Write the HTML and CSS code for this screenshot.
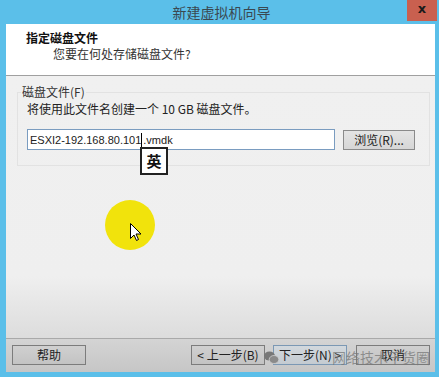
FILE: index.html
```html
<!DOCTYPE html>
<html>
<head>
<meta charset="utf-8">
<link rel="stylesheet" href="styles.css">
</head>
<body>
<div class="window">
  <div class="titlebar">
    <div class="title">新建虚拟机向导</div>
    <div class="close">x</div>
  </div>
  <div class="client">
    <div class="header">
      <div class="h-title">指定磁盘文件</div>
      <div class="h-sub">您要在何处存储磁盘文件?</div>
    </div>
    <div class="content">
      <div class="group">
        <div class="legend">磁盘文件(F)</div>
        <div class="desc">将使用此文件名创建一个 10 GB 磁盘文件。</div>
        <div class="row">
          <div class="input"><span>ESXI2-192.168.80.101</span><span class="caret"></span><span>.vmdk</span>
            <div class="ime">英</div>
          </div>
          <div class="btn browse">浏览(R)...</div>
        </div>
      </div>
      <div class="spot">
        <svg class="cursor" width="12" height="19" viewBox="0 0 12 19"><path d="M0.5 0.5 L0.5 15.5 L4 12 L6.5 17.5 L8.5 16.5 L6 11 L11 11 Z" fill="#fff" stroke="#000" stroke-width="1" stroke-linejoin="miter"/></svg>
      </div>
    </div>
    <div class="footer">
      <div class="btn">帮助</div>
      <div class="spacer"></div>
      <div class="btn">&lt; 上一步(B)</div>
      <div class="btn next">下一步(N) &gt;</div>
      <div class="btn cancel">取消</div>
      <div class="watermark">
        <svg width="15" height="13" viewBox="0 0 15 13"><ellipse cx="5.5" cy="5" rx="5.5" ry="4.5" fill="#777"/><ellipse cx="10" cy="8.5" rx="4.8" ry="4" fill="#8a8a8a" stroke="#cfcfcf" stroke-width="0.8"/></svg>
        <span>网络技术干货圈</span>
      </div>
    </div>
  </div>
</div>
</body>
</html>
```

FILE: styles.css
```css
* { box-sizing: border-box; }
html, body { margin: 0; padding: 0; }
body {
  width: 439px;
  height: 377px;
  overflow: hidden;
  font-family: "Noto Sans CJK SC", "DejaVu Sans", sans-serif;
  font-size: 12px;
  color: #1e1e1e;
}
.window {
  width: 439px;
  height: 377px;
  background: #5bbfe9;
  display: flex;
  flex-direction: column;
  padding: 0 4px 5px 6px;
}
.titlebar {
  height: 24px;
  display: flex;
  align-items: center;
  justify-content: center;
  position: relative;
  flex: none;
}
.title {
  font-size: 14px;
  color: #3a4850;
  margin-left: 2px;
}
.close {
  position: absolute;
  right: -2px;
  top: 0;
  width: 30px;
  height: 21px;
  background: #c9604f;
  color: #1a1a1a;
  font-family: "DejaVu Sans", sans-serif;
  font-weight: bold;
  font-size: 13px;
  line-height: 18px;
  text-align: center;
}
.client {
  flex: 1;
  display: flex;
  flex-direction: column;
  background: #f0f0f0;
  position: relative;
}
.header {
  height: 52px;
  background: #ffffff;
  border-bottom: 1px solid #a0a0a0;
  padding: 6px 0 0 20px;
  flex: none;
}
.h-title {
  font-weight: bold;
  font-size: 12px;
  line-height: 16px;
  color: #111;
}
.h-sub {
  margin-left: 27px;
  line-height: 16px;
  color: #333;
}
.content {
  flex: 1;
  position: relative;
  padding: 8px 5px 0 11px;
  background: linear-gradient(#f0f0f0 0, #efefef 200px, #dcdcdc 262px);
}
.group {
  border: 1px solid #e2e2e2;
  height: 74px;
  margin-top: 8px;
  position: relative;
  padding: 8px 0 0 9px;
}
.legend {
  position: absolute;
  top: -9px;
  left: 3px;
  padding: 0 1px;
  line-height: 16px;
  color: #333;
  background: #f0f0f0;
}
.desc {
  line-height: 16px;
  margin-top: 0;
  color: #222;
}
.row {
  display: flex;
  align-items: center;
  margin-top: 12px;
  gap: 8px;
}
.input {
  width: 308px;
  height: 21px;
  border: 1px solid #7a9cc0;
  background: #fff;
  display: flex;
  align-items: center;
  padding-left: 2px;
  font-family: "Liberation Sans", sans-serif;
  font-size: 11px;
  color: #222;
  position: relative;
}
.caret {
  width: 1px;
  height: 14px;
  background: #000;
  margin: 0 1px 0 0;
}
.ime {
  position: absolute;
  left: 112px;
  top: 17px;
  width: 28px;
  height: 28px;
  border: 2px solid #222;
  background: #fff;
  font-family: "Noto Sans CJK SC", sans-serif;
  font-weight: bold;
  font-size: 15px;
  line-height: 24px;
  text-align: center;
  color: #111;
}
.btn {
  width: 74px;
  height: 20px;
  border: 1px solid #8a8a8a;
  background: linear-gradient(#e4e4e4, #d6d6d6);
  text-align: center;
  line-height: 18px;
  font-size: 12px;
  color: #222;
  flex: none;
}
.browse {
  width: 72px;
  height: 20px;
  margin-top: 1px;
}
.spot {
  position: absolute;
  left: 99px;
  top: 124px;
  width: 50px;
  height: 50px;
  border-radius: 50%;
  background: #f1e30c;
}
.cursor {
  position: absolute;
  left: 25px;
  top: 23px;
}
.footer {
  height: 34px;
  flex: none;
  border-top: 1px solid #a9a9a9;
  background: linear-gradient(#d4d4d4, #c6c6c6);
  display: flex;
  align-items: center;
  padding: 0 5px 1px 6px;
  gap: 8px;
  position: relative;
}
.footer .btn {
  background: linear-gradient(#d0d0d0, #c3c3c3);
  border-color: #7c7c7c;
  height: 20px;
}
.spacer { flex: 1; }
.next {
  border-color: #7b98b4 !important;
  background: linear-gradient(#d2d8dd, #c4cbd1) !important;
}
.cancel { margin-left: 1px; }
.watermark {
  position: absolute;
  left: 258px;
  top: 8px;
  display: flex;
  align-items: center;
  gap: 53px;
  color: rgba(120, 120, 120, 0.75);
  font-size: 14px;
}
```
